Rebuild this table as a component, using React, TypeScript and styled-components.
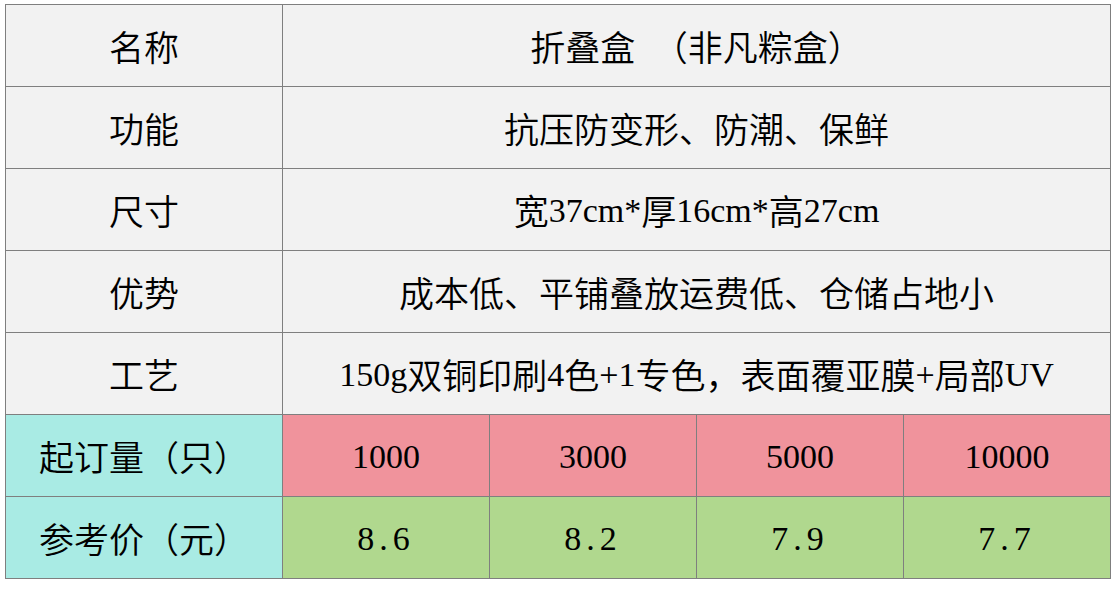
import React from "react";
import styled, { createGlobalStyle } from "styled-components";

const Global = createGlobalStyle`
  html, body { margin: 0; padding: 0; background: #ffffff; }
  body { padding: 4px 0 0 5px; }
`;

const Grid = styled.div`
  display: grid;
  grid-template-columns: 276px repeat(4, 206px);
  grid-auto-rows: 81px;
  gap: 1px;
  width: max-content;
  background: #7f7f7f;
  border: 1px solid #7f7f7f;
  font-family: "Noto Sans CJK SC", sans-serif;
  font-size: 34px;
  color: #000000;
`;

type Tone = "grey" | "cyan" | "pink" | "green";
const tones: Record<Tone, string> = {
  grey: "#f2f2f2",
  cyan: "#a9ebe4",
  pink: "#f0939c",
  green: "#b0d88e",
};

const Cell = styled.div<{ $tone: Tone; $wide?: boolean; $spaced?: boolean }>`
  display: flex;
  align-items: center;
  justify-content: center;
  grid-column: ${(p) => (p.$wide ? "span 4" : "auto")};
  background: ${(p) => tones[p.$tone]};
  line-height: 1;
  white-space: nowrap;
  letter-spacing: ${(p) => (p.$spaced ? "5px" : "0")};
`;

const Cjk = styled.span`
  font-size: 35px;
  font-weight: 350;
`;

const Latin = styled.span`
  font-family: "Liberation Serif", serif;
  font-size: 34px;
  position: relative;
  top: 1px;
`;

function Mixed({ text }: { text: string }) {
  const parts = text.match(/[\x20-\x7e]+|[^\x20-\x7e]+/g) || [];
  return (
    <>
      {parts.map((p, i) =>
        /^[\x20-\x7e]+$/.test(p) ? <Latin key={i}>{p}</Latin> : <Cjk key={i}>{p}</Cjk>
      )}
    </>
  );
}

const rows: [string, string][] = [
  ["名称", "折叠盒　（非凡粽盒）"],
  ["功能", "抗压防变形、防潮、保鲜"],
  ["尺寸", "宽37cm*厚16cm*高27cm"],
  ["优势", "成本低、平铺叠放运费低、仓储占地小"],
  ["工艺", "150g双铜印刷4色+1专色，表面覆亚膜+局部UV"],
];

const qty = ["1000", "3000", "5000", "10000"];
const price = ["8.6", "8.2", "7.9", "7.7"];

export default function App() {
  return (
    <>
      <Global />
      <Grid>
        {rows.map(([k, v]) => (
          <React.Fragment key={k}>
            <Cell $tone="grey">
              <Cjk>{k}</Cjk>
            </Cell>
            <Cell $tone="grey" $wide>
              <Mixed text={v} />
            </Cell>
          </React.Fragment>
        ))}
        <Cell $tone="cyan">
          <Cjk>起订量（只）</Cjk>
        </Cell>
        {qty.map((q) => (
          <Cell key={q} $tone="pink">
            <Latin>{q}</Latin>
          </Cell>
        ))}
        <Cell $tone="cyan">
          <Cjk>参考价（元）</Cjk>
        </Cell>
        {price.map((q) => (
          <Cell key={q} $tone="green" $spaced>
            <Latin>{q}</Latin>
          </Cell>
        ))}
      </Grid>
    </>
  );
}
